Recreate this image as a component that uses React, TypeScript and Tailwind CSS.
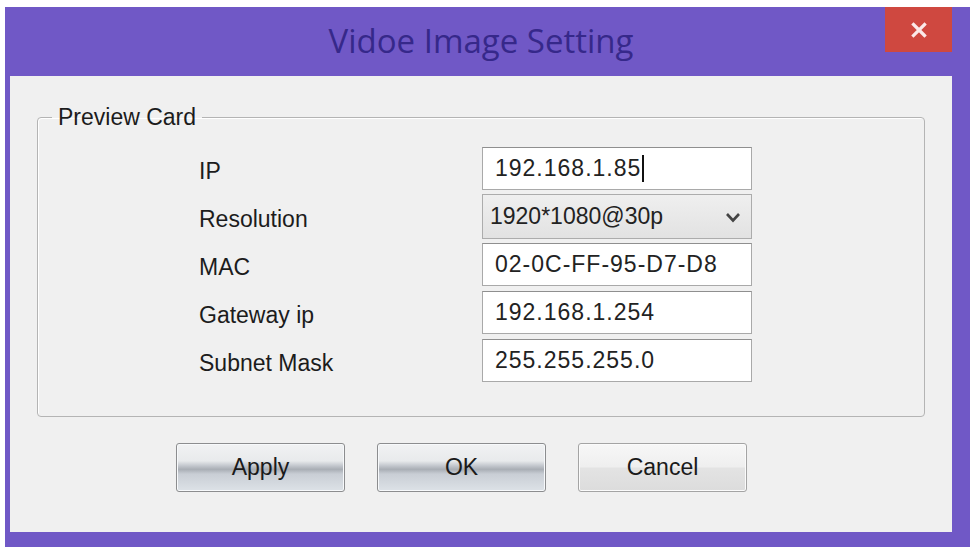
import React from "react";

const rows: { label: string; value: string; kind: "input" | "combo"; cursor?: boolean }[] = [
  { label: "IP", value: "192.168.1.85", kind: "input", cursor: true },
  { label: "Resolution", value: "1920*1080@30p", kind: "combo" },
  { label: "MAC", value: "02-0C-FF-95-D7-D8", kind: "input" },
  { label: "Gateway ip", value: "192.168.1.254", kind: "input" },
  { label: "Subnet Mask", value: "255.255.255.0", kind: "input" },
];

export default function App() {
  return (
    <div className="w-[973px] h-[551px] bg-white pt-[7px] pl-[5px] font-['Liberation_Sans',Arial,sans-serif] overflow-hidden">
      <div className="w-[965px] h-[540px] bg-[#7058c6] flex flex-col">
        {/* Title bar */}
        <div className="relative h-[69px] flex items-center justify-center pr-[13px]">
          <span className="font-['Open_Sans',sans-serif] text-[33px] leading-none text-[#36288a] pb-[2px]">
            Vidoe Image Setting
          </span>
          <button className="absolute right-[18px] top-0 w-[67px] h-[45px] bg-[#cf4840] flex items-center justify-center">
            <svg width="18" height="16" viewBox="0 0 18 16">
              <path d="M3.5 2.5 L14.5 13.5 M14.5 2.5 L3.5 13.5" stroke="#fbe9e9" strokeWidth="3.2" strokeLinecap="square" />
            </svg>
          </button>
        </div>
        {/* Client area */}
        <div className="ml-[5px] mr-[18px] h-[456px] bg-[#f0f0f0] flex flex-col">
          <fieldset className="mx-[27px] mt-[27px] border border-[#b4b4b4] rounded-[4px] px-0 pt-[16px] pb-[34px] shadow-[inset_1px_1px_0_#ffffff]">
            <legend className="ml-[14px] px-[6px] text-[23px] leading-[28px] text-[#1c1c1c]">Preview Card</legend>
            <div className="flex flex-col gap-[5px]">
              {rows.map((r) => (
                <div key={r.label} className="grid grid-cols-[444px_270px] items-center h-[43px]">
                  <div className="pl-[161px] text-[23px] text-[#1c1c1c] pt-[5px]">{r.label}</div>
                  {r.kind === "input" ? (
                    <div className="h-[43px] bg-white border border-[#a9a9a9] border-t-[#8f8f8f] flex items-center pl-[12px] text-[23px] tracking-[1px] text-[#222222]">
                      {r.value}
                      {r.cursor && <span className="inline-block w-[2px] h-[27px] bg-[#111] ml-[1px]" />}
                    </div>
                  ) : (
                    <div className="h-[45px] -my-[1px] bg-[linear-gradient(to_bottom,#efefef,#e2e2e2)] border border-[#acacac] flex items-center justify-between pl-[7px] pr-[10px] text-[23px] text-[#222222]">
                      <span>{r.value}</span>
                      <svg width="16" height="12" viewBox="0 0 16 12">
                        <path d="M2 3 L8 9.5 L14 3" fill="none" stroke="#444444" strokeWidth="2.6" />
                      </svg>
                    </div>
                  )}
                </div>
              ))}
            </div>
          </fieldset>
          <div className="flex gap-[32px] pl-[166px] mt-[26px]">
            {["Apply", "OK"].map((t) => (
              <button
                key={t}
                className="w-[169px] h-[49px] rounded-[3px] border border-[#8c8d8f] bg-[linear-gradient(to_bottom,#f1f2f3_0%,#e8eaec_36%,#c4c8ce_46%,#a9aeb5_54%,#c9ced5_64%,#dde2e7_100%)] shadow-[inset_0_0_0_1px_#f7f9fb] text-[23px] text-[#1a1a1a] flex items-center justify-center"
              >
                {t}
              </button>
            ))}
            <button className="w-[169px] h-[49px] rounded-[3px] border border-[#a4a4a4] bg-[linear-gradient(to_bottom,#f7f7f7_0%,#efefef_48%,#e3e3e3_52%,#dcdcdc_100%)] shadow-[inset_0_0_0_1px_#fbfbfb] text-[23px] text-[#1a1a1a] flex items-center justify-center">
              Cancel
            </button>
          </div>
        </div>
      </div>
    </div>
  );
}
